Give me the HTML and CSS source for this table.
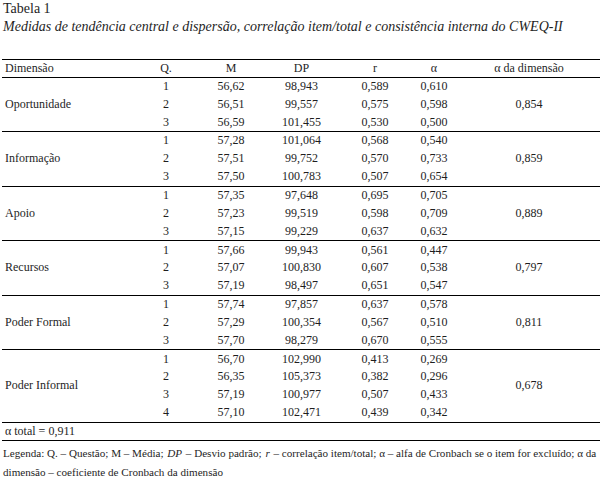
FILE: index.html
```html
<!DOCTYPE html>
<html lang="pt">
<head>
<meta charset="utf-8">
<title>Tabela 1</title>
<link rel="stylesheet" href="styles.css">
</head>
<body>
<div class="page">
  <p class="title">Tabela 1</p>
  <p class="caption">Medidas de tendência central e dispersão, correlação item/total e consistência interna do CWEQ-II</p>
  <table class="data">
    <colgroup>
      <col class="c-dim"><col class="c-q"><col class="c-m"><col class="c-dp"><col class="c-r"><col class="c-a"><col class="c-ad">
    </colgroup>
    <thead>
      <tr><th class="left">Dimensão</th><th>Q.</th><th>M</th><th>DP</th><th>r</th><th>α</th><th>α da dimensão</th></tr>
    </thead>
    <tbody class="group">
      <tr><td class="left" rowspan="3">Oportunidade</td><td>1</td><td>56,62</td><td>98,943</td><td>0,589</td><td>0,610</td><td rowspan="3">0,854</td></tr>
      <tr><td>2</td><td>56,51</td><td>99,557</td><td>0,575</td><td>0,598</td></tr>
      <tr><td>3</td><td>56,59</td><td>101,455</td><td>0,530</td><td>0,500</td></tr>
    </tbody>
    <tbody class="group">
      <tr><td class="left" rowspan="3">Informação</td><td>1</td><td>57,28</td><td>101,064</td><td>0,568</td><td>0,540</td><td rowspan="3">0,859</td></tr>
      <tr><td>2</td><td>57,51</td><td>99,752</td><td>0,570</td><td>0,733</td></tr>
      <tr><td>3</td><td>57,50</td><td>100,783</td><td>0,507</td><td>0,654</td></tr>
    </tbody>
    <tbody class="group">
      <tr><td class="left" rowspan="3">Apoio</td><td>1</td><td>57,35</td><td>97,648</td><td>0,695</td><td>0,705</td><td rowspan="3">0,889</td></tr>
      <tr><td>2</td><td>57,23</td><td>99,519</td><td>0,598</td><td>0,709</td></tr>
      <tr><td>3</td><td>57,15</td><td>99,229</td><td>0,637</td><td>0,632</td></tr>
    </tbody>
    <tbody class="group">
      <tr><td class="left" rowspan="3">Recursos</td><td>1</td><td>57,66</td><td>99,943</td><td>0,561</td><td>0,447</td><td rowspan="3">0,797</td></tr>
      <tr><td>2</td><td>57,07</td><td>100,830</td><td>0,607</td><td>0,538</td></tr>
      <tr><td>3</td><td>57,19</td><td>98,497</td><td>0,651</td><td>0,547</td></tr>
    </tbody>
    <tbody class="group">
      <tr><td class="left" rowspan="3">Poder Formal</td><td>1</td><td>57,74</td><td>97,857</td><td>0,637</td><td>0,578</td><td rowspan="3">0,811</td></tr>
      <tr><td>2</td><td>57,29</td><td>100,354</td><td>0,567</td><td>0,510</td></tr>
      <tr><td>3</td><td>57,70</td><td>98,279</td><td>0,670</td><td>0,555</td></tr>
    </tbody>
    <tbody class="group">
      <tr><td class="left" rowspan="4">Poder Informal</td><td>1</td><td>56,70</td><td>102,990</td><td>0,413</td><td>0,269</td><td rowspan="4">0,678</td></tr>
      <tr><td>2</td><td>56,35</td><td>105,373</td><td>0,382</td><td>0,296</td></tr>
      <tr><td>3</td><td>57,19</td><td>100,977</td><td>0,507</td><td>0,433</td></tr>
      <tr><td>4</td><td>57,10</td><td>102,471</td><td>0,439</td><td>0,342</td></tr>
    </tbody>
    <tbody class="total">
      <tr><td class="left" colspan="7">α total = 0,911</td></tr>
    </tbody>
  </table>
  <p class="legend">Legenda: Q. – Questão; M – Média; <i>DP</i> – Desvio padrão; <i>r</i> – correlação item/total; α – alfa de Cronbach se o item for excluído; α da<br>dimensão – coeficiente de Cronbach da dimensão</p>
</div>
</body>
</html>
```
FILE: styles.css
```css
html, body {
  margin: 0;
  padding: 0;
  background: #ffffff;
}
body {
  font-family: "Liberation Serif", "DejaVu Serif", serif;
  color: #1e1e1e;
}
.page {
  padding: 0 0 0 2px;
  width: 598px;
}
.title {
  margin: 0;
  padding-left: 1px;
  font-size: 14px;
  line-height: 18px;
}
.caption {
  margin: 0;
  padding-left: 1px;
  font-size: 14px;
  line-height: 18px;
  font-style: italic;
}
.data {
  margin-top: 23px;
  width: 598px;
  table-layout: fixed;
  border-collapse: collapse;
  font-size: 12px;
  border-top: 1.5px solid #000;
}
.c-dim { width: 131px; }
.c-q { width: 66px; }
.c-m { width: 64px; }
.c-dp { width: 77px; }
.c-r { width: 70px; }
.c-a { width: 48px; }
.c-ad { width: 142px; }
.data th, .data td {
  padding: 0;
  text-align: center;
  font-weight: normal;
  vertical-align: middle;
}
.data th {
  height: 16.5px;
  line-height: 16px;
  border-bottom: 1px solid #000;
}
.data td {
  height: 17.85px;
  line-height: 17px;
}
.data .left {
  text-align: left;
  padding-left: 3px;
}
.group tr:last-child td,
.group td[rowspan] {
  border-bottom: 1px solid #000;
}
.total td {
  height: 17px;
  border-bottom: 1px solid #000;
}
.legend {
  margin: 3px 0 0 0;
  padding-left: 1px;
  font-size: 11.1px;
  line-height: 19px;
  white-space: nowrap;
}
.legend i {
  padding: 0 1px;
}
```
